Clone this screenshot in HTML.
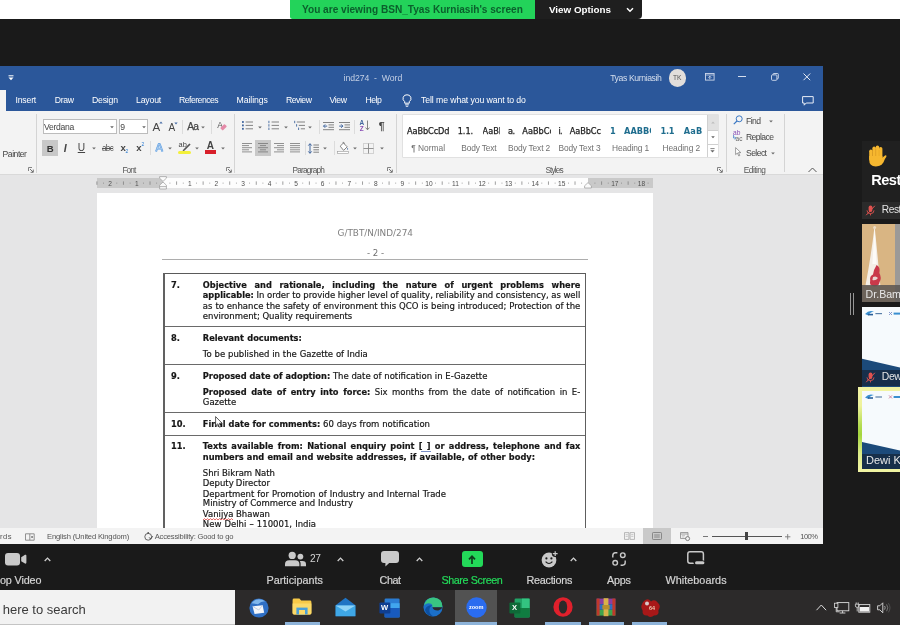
<!DOCTYPE html>
<html lang="en"><head><meta charset="utf-8"><title>Zoom Meeting - screen share</title>
<style>
html,body{margin:0;padding:0;background:#1a1a1a;width:900px;height:625px;overflow:hidden;}
#v{position:relative;width:900px;height:625px;overflow:hidden;}
#s{position:absolute;left:-6px;top:-6px;width:912px;height:637px;background:#1a1a1a;filter:blur(0.3px);}
#o{position:absolute;left:6px;top:6px;width:900px;height:625px;font-family:"Liberation Sans",sans-serif;}
#o div,#o span,#o svg{position:absolute;}
#o span{white-space:pre;line-height:1;}
#o svg{overflow:visible;}
</style></head><body><div id="v"><div id="s"><div id="o">
<div style="left:-6px;top:-6px;width:912px;height:25px;background:#fff;"></div>
<div style="left:290px;top:-6px;width:246px;height:25px;background:#23d35a;border-radius:0 0 0 2.5px;"></div>
<div style="left:535px;top:-6px;width:107px;height:25px;background:#1f1f1f;border-radius:0 0 4px 0;"></div>
<span style="left:302px;top:5.2px;font-size:10.1px;color:#0b5f2c;font-weight:bold;">You are viewing BSN_Tyas Kurniasih&#x27;s screen</span>
<span style="left:549px;top:5.34px;font-size:9.82px;color:#fff;font-weight:bold;">View Options</span>
<svg style="left:626px;top:7px;" width="8" height="6" viewBox="0 0 8 6"><path d="M1 1.2 L4 4.2 L7 1.2" fill="none" stroke="#fff" stroke-width="1.5"/></svg>
<div style="left:-6px;top:66px;width:829px;height:45px;background:#2b579a;"></div>
<div style="left:-6px;top:90px;width:12px;height:21px;background:#f3f3f3;"></div>
<div style="left:-6px;top:111px;width:829px;height:64px;background:#f3f3f3;"></div>
<div style="left:-6px;top:175px;width:829px;height:353px;background:#e5e5e6;"></div>
<div style="left:-6px;top:174px;width:829px;height:1px;background:#d9d9d9;"></div>
<div style="left:96.8px;top:193.4px;width:556.4px;height:335px;background:#fff;"></div>
<div style="left:-6px;top:528px;width:829px;height:16px;background:#f3f3f3;"></div>
<div style="left:-6px;top:544px;width:912px;height:46px;background:#1a1a1a;"></div>
<div style="left:-6px;top:589.8px;width:912px;height:41.2px;background:#2c2a2a;"></div>
<div style="left:-6px;top:589.8px;width:241px;height:41.2px;background:#f2f2f2;"></div>
<div style="left:-6px;top:624px;width:241px;height:7px;background:#c4c4c4;"></div>
<div style="left:455px;top:589.8px;width:42px;height:41.2px;background:#525252;"></div>
<svg style="left:7px;top:75px;" width="8" height="6" viewBox="0 0 8 6"><path d="M1.5 0.8 H6.5" stroke="#fff" stroke-width="1"/><path d="M1.5 2.6 L4 5.2 L6.5 2.6 Z" fill="#fff"/></svg>
<span style="left:343.5px;top:74.47px;font-size:8.7px;color:#c3cfe4;letter-spacing:-0.037px;">ind274  -  Word</span>
<span style="left:610.2px;top:74.47px;font-size:8.7px;color:#d5deed;letter-spacing:-0.405px;">Tyas Kurniasih</span>
<div style="left:668.5px;top:69.2px;width:17.4px;height:17.4px;border-radius:50%;background:#e2dedb;"></div>
<span style="left:672.98px;top:75.06px;font-size:6.6px;color:#555;">TK</span>
<svg style="left:704.6px;top:73.4px;" width="10" height="8" viewBox="0 0 10 8"><rect x="0.5" y="0.5" width="8.6" height="6.6" fill="none" stroke="#cdd7ea" stroke-width="0.9"/><path d="M0.5 2 H9.1" stroke="#cdd7ea" stroke-width="0.8"/><path d="M4.8 6.2 V3.4 M3.4 4.6 L4.8 3.2 L6.2 4.6" fill="none" stroke="#cdd7ea" stroke-width="0.9"/></svg>
<div style="left:738px;top:76.4px;width:7.6px;height:0.9px;background:#d5deee;"></div>
<svg style="left:770.6px;top:73.4px;" width="8" height="8" viewBox="0 0 8 8"><rect x="0.5" y="1.9" width="5.4" height="5.4" rx="0.9" fill="none" stroke="#d5deee" stroke-width="0.9"/><path d="M2 1.9 V1.3 Q2 0.5 2.8 0.5 H6.5 Q7.3 0.5 7.3 1.3 V5 Q7.3 5.8 6.5 5.8 H5.9" fill="none" stroke="#d5deee" stroke-width="0.9"/></svg>
<svg style="left:802.8px;top:73.2px;" width="8" height="8" viewBox="0 0 8 8"><path d="M0.5 0.5 L7.2 7.2 M7.2 0.5 L0.5 7.2" stroke="#e3e9f4" stroke-width="1"/></svg>
<svg style="left:801.5px;top:95.5px;" width="12" height="10" viewBox="0 0 12 10"><path d="M0.6 0.6 H11.2 V7 H4.2 L2.2 9.2 V7 H0.6 Z" fill="none" stroke="#e8edf6" stroke-width="1"/></svg>
<span style="left:15.5px;top:96.17px;font-size:8.7px;color:#fff;letter-spacing:-0.192px;">Insert</span>
<span style="left:54.7px;top:96.17px;font-size:8.7px;color:#fff;letter-spacing:-0.334px;">Draw</span>
<span style="left:92px;top:96.17px;font-size:8.7px;color:#fff;letter-spacing:-0.216px;">Design</span>
<span style="left:136px;top:96.17px;font-size:8.7px;color:#fff;letter-spacing:-0.164px;">Layout</span>
<span style="left:179px;top:96.17px;font-size:8.7px;color:#fff;letter-spacing:-0.532px;">References</span>
<span style="left:236.5px;top:96.17px;font-size:8.7px;color:#fff;letter-spacing:-0.059px;">Mailings</span>
<span style="left:286px;top:96.17px;font-size:8.7px;color:#fff;letter-spacing:-0.505px;">Review</span>
<span style="left:329.5px;top:96.17px;font-size:8.7px;color:#fff;letter-spacing:-0.4px;">View</span>
<span style="left:365.5px;top:96.17px;font-size:8.7px;color:#fff;letter-spacing:-0.531px;">Help</span>
<span style="left:421px;top:96.17px;font-size:8.7px;color:#fff;letter-spacing:-0.091px;">Tell me what you want to do</span>
<svg style="left:402px;top:94px;" width="10" height="13" viewBox="0 0 10 13"><path d="M5 0.8 A3.7 3.7 0 0 1 7.3 7.6 V9.2 H2.7 V7.6 A3.7 3.7 0 0 1 5 0.8 Z" fill="none" stroke="#fff" stroke-width="1"/><path d="M3.1 10.8 H6.9 M3.8 12.3 H6.2" stroke="#fff" stroke-width="0.9"/></svg>
<span style="left:2.6px;top:150.41px;font-size:8.6px;color:#444;letter-spacing:-0.475px;">Painter</span>
<svg style="left:28px;top:166.5px;" width="6" height="6" viewBox="0 0 6 6"><path d="M0.5 4 V0.5 H4" fill="none" stroke="#777" stroke-width="0.9"/><path d="M2 2 L5 5 M5.3 2.6 V5.3 H2.6" fill="none" stroke="#666" stroke-width="0.9"/></svg>
<div style="left:36px;top:113.5px;width:1px;height:59.0px;background:#d4d4d4;"></div>
<div style="left:42.5px;top:118.5px;width:72.7px;height:13.9px;background:#fff;border:1px solid #bcbcbc;"></div>
<span style="left:44px;top:122.72px;font-size:8.6px;color:#444;letter-spacing:-0.307px;">Verdana</span>
<svg style="left:110.4px;top:125.8px;" width="4" height="3" viewBox="0 0 4 3"><path d="M0.2 0.3 H3.8 L2 2.3 Z" fill="#666"/></svg>
<div style="left:118.6px;top:118.5px;width:27.8px;height:13.9px;background:#fff;border:1px solid #bcbcbc;"></div>
<span style="left:120.3px;top:122.72px;font-size:8.6px;color:#444;">9</span>
<svg style="left:141.9px;top:125.8px;" width="4" height="3" viewBox="0 0 4 3"><path d="M0.2 0.3 H3.8 L2 2.3 Z" fill="#666"/></svg>
<span style="left:152.6px;top:121.74px;font-size:11.5px;color:#444;">A</span>
<svg style="left:158.8px;top:121.4px;" width="4" height="3" viewBox="0 0 4 3"><path d="M0.3 2.4 H3.7 L2 0.4 Z" fill="#4a6fa8"/></svg>
<span style="left:168.6px;top:123.15px;font-size:10px;color:#444;">A</span>
<svg style="left:174px;top:121.6px;" width="4" height="3" viewBox="0 0 4 3"><path d="M0.3 0.4 H3.7 L2 2.4 Z" fill="#4a6fa8"/></svg>
<div style="left:182.3px;top:119.5px;width:1px;height:14px;background:#dcdcdc;"></div>
<span style="left:187.3px;top:121.56px;font-size:10.2px;color:#444;letter-spacing:-0.9px;-webkit-text-stroke:0.25px #444;">Aa</span>
<svg style="left:201px;top:126.1px;" width="4" height="3" viewBox="0 0 4 3"><path d="M0.2 0.5 H3.8 L2 2.5 Z" fill="#6a6a6a"/></svg>
<div style="left:211.4px;top:119.5px;width:1px;height:14px;background:#dcdcdc;"></div>
<span style="left:217.2px;top:120.56px;font-size:8.5px;color:#555;">A</span>
<svg style="left:219.6px;top:124.2px;" width="7" height="7" viewBox="0 0 7 7"><rect x="1.6" y="0.3" width="3.6" height="6" rx="0.8" transform="rotate(45 3.5 3.5)" fill="#e48aa8"/></svg>
<div style="left:42.2px;top:140px;width:15.8px;height:16.3px;background:#c8c8c8;"></div>
<span style="left:46.63px;top:143.74px;font-size:9.6px;color:#333;font-weight:bold;">B</span>
<span style="left:63.73px;top:143.16px;font-size:10.6px;color:#444;font-style:italic;font-weight:bold;">I</span>
<span style="left:77.72px;top:142.96px;font-size:10.2px;color:#444;text-decoration:underline;text-underline-offset:1px;">U</span>
<svg style="left:92.2px;top:147.4px;" width="4" height="3" viewBox="0 0 4 3"><path d="M0.2 0.5 H3.8 L2 2.5 Z" fill="#6a6a6a"/></svg>
<span style="left:102px;top:144.6px;font-size:8.2px;color:#555;letter-spacing:-0.71px;text-decoration:line-through;">abc</span>
<span style="left:120.4px;top:143.44px;font-size:9.6px;color:#444;font-weight:bold;">x</span>
<span style="left:125.6px;top:148.62px;font-size:5px;color:#2b7cd3;">2</span>
<span style="left:136.2px;top:143.44px;font-size:9.6px;color:#444;font-weight:bold;">x</span>
<span style="left:141.6px;top:141.62px;font-size:5px;color:#2b7cd3;">2</span>
<div style="left:149.7px;top:141px;width:1px;height:14px;background:#dcdcdc;"></div>
<svg style="left:155px;top:143.2px;" width="8.5" height="9.4" viewBox="0 0 10 11"><path d="M1.2 10 L4.4 1.2 H5.6 L8.8 10 M2.6 6.6 H7.4" fill="none" stroke="#a9cdf3" stroke-width="2.6" stroke-linejoin="round"/><path d="M1.2 10 L4.4 1.2 H5.6 L8.8 10 M2.6 6.6 H7.4" fill="none" stroke="#3f8ad8" stroke-width="1.7" stroke-linejoin="round"/><path d="M1.2 10 L4.4 1.2 H5.6 L8.8 10 M2.6 6.6 H7.4" fill="none" stroke="#fff" stroke-width="0.6" stroke-linejoin="round"/></svg>
<svg style="left:167.9px;top:147.4px;" width="4" height="3" viewBox="0 0 4 3"><path d="M0.2 0.5 H3.8 L2 2.5 Z" fill="#6a6a6a"/></svg>
<span style="left:178.6px;top:141.09px;font-size:7.4px;color:#444;">ab</span>
<svg style="left:181px;top:142.5px;" width="10" height="9" viewBox="0 0 10 9"><path d="M8.4 0.4 L2.4 6.4 L1.2 8.6 L3.6 7.6 L9.6 1.6 Z" fill="#555"/></svg>
<div style="left:178px;top:150.6px;width:12.6px;height:3.4px;background:#f3f03a;border-radius:1.5px;"></div>
<svg style="left:194.8px;top:147.4px;" width="4" height="3" viewBox="0 0 4 3"><path d="M0.2 0.5 H3.8 L2 2.5 Z" fill="#6a6a6a"/></svg>
<span style="left:206.79px;top:141.45px;font-size:10px;color:#444;font-weight:bold;">A</span>
<div style="left:205px;top:150.4px;width:11px;height:3.2px;background:#d81f2a;"></div>
<svg style="left:221.2px;top:147.4px;" width="4" height="3" viewBox="0 0 4 3"><path d="M0.2 0.5 H3.8 L2 2.5 Z" fill="#6a6a6a"/></svg>
<span style="left:122.4px;top:166.06px;font-size:8.3px;color:#555;letter-spacing:-0.869px;">Font</span>
<svg style="left:225.5px;top:166.5px;" width="6" height="6" viewBox="0 0 6 6"><path d="M0.5 4 V0.5 H4" fill="none" stroke="#777" stroke-width="0.9"/><path d="M2 2 L5 5 M5.3 2.6 V5.3 H2.6" fill="none" stroke="#666" stroke-width="0.9"/></svg>
<div style="left:234px;top:113.5px;width:1px;height:59.0px;background:#d4d4d4;"></div>
<svg style="left:241.7px;top:121.4px;" width="11" height="9" viewBox="0 0 11 9"><rect x="0" y="0.09999999999999998" width="1.8" height="1.8" fill="#41669e"/><path d="M3.6 1.0 H11" stroke="#767676" stroke-width="0.9"/><rect x="0" y="3.5000000000000004" width="1.8" height="1.8" fill="#41669e"/><path d="M3.6 4.4 H11" stroke="#767676" stroke-width="0.9"/><rect x="0" y="6.8999999999999995" width="1.8" height="1.8" fill="#41669e"/><path d="M3.6 7.8 H11" stroke="#767676" stroke-width="0.9"/></svg>
<svg style="left:257.7px;top:125.6px;" width="4" height="3" viewBox="0 0 4 3"><path d="M0.2 0.5 H3.8 L2 2.5 Z" fill="#6a6a6a"/></svg>
<svg style="left:267.8px;top:121.4px;" width="11" height="9" viewBox="0 0 11 9"><path d="M0.9 -0.19999999999999996 V2.2" stroke="#41669e" stroke-width="0.9"/><path d="M3.6 1.0 H11" stroke="#767676" stroke-width="0.9"/><path d="M0.9 3.2 V5.6000000000000005" stroke="#41669e" stroke-width="0.9"/><path d="M3.6 4.4 H11" stroke="#767676" stroke-width="0.9"/><path d="M0.9 6.6 V9.0" stroke="#41669e" stroke-width="0.9"/><path d="M3.6 7.8 H11" stroke="#767676" stroke-width="0.9"/></svg>
<svg style="left:284px;top:125.6px;" width="4" height="3" viewBox="0 0 4 3"><path d="M0.2 0.5 H3.8 L2 2.5 Z" fill="#6a6a6a"/></svg>
<svg style="left:294.3px;top:121.4px;" width="11" height="9" viewBox="0 0 11 9"><path d="M0.7 -0.2 V2.2" stroke="#41669e" stroke-width="0.9"/><path d="M2.8 1 H11" stroke="#767676" stroke-width="0.9"/><path d="M2.6 3.2 V5.6" stroke="#41669e" stroke-width="0.9"/><path d="M4.8 4.4 H11" stroke="#767676" stroke-width="0.9"/><path d="M4.6 6.6 V9" stroke="#41669e" stroke-width="0.9"/><path d="M6.8 7.8 H11" stroke="#767676" stroke-width="0.9"/></svg>
<svg style="left:308.3px;top:125.6px;" width="4" height="3" viewBox="0 0 4 3"><path d="M0.2 0.5 H3.8 L2 2.5 Z" fill="#6a6a6a"/></svg>
<div style="left:318.5px;top:119.5px;width:1px;height:14px;background:#dcdcdc;"></div>
<svg style="left:322.6px;top:121.6px;" width="11" height="9" viewBox="0 0 11 9"><path d="M0 0.5 H11 M5.5 2.9 H11 M5.5 5.3 H11 M0 7.7 H11" stroke="#767676" stroke-width="0.9"/><path d="M4.2 4.1 H0.6 M2.2 2.4 L0.5 4.1 L2.2 5.8" fill="none" stroke="#41669e" stroke-width="1"/></svg>
<svg style="left:338.7px;top:121.6px;" width="11" height="9" viewBox="0 0 11 9"><path d="M0 0.5 H11 M5.5 2.9 H11 M5.5 5.3 H11 M0 7.7 H11" stroke="#767676" stroke-width="0.9"/><path d="M0.2 4.1 H3.8 M2.2 2.4 L3.9 4.1 L2.2 5.8" fill="none" stroke="#41669e" stroke-width="1"/></svg>
<div style="left:353.8px;top:119.5px;width:1px;height:14px;background:#dcdcdc;"></div>
<span style="left:359.5px;top:119.56px;font-size:6.4px;color:#41669e;font-weight:bold;">A</span>
<span style="left:359.7px;top:125.56px;font-size:6.4px;color:#8a4fb5;font-weight:bold;">Z</span>
<svg style="left:365px;top:120px;" width="5" height="11" viewBox="0 0 5 11"><path d="M2.5 0.5 V9.6 M0.6 7.6 L2.5 9.8 L4.4 7.6" fill="none" stroke="#767676" stroke-width="0.9"/></svg>
<span style="left:378.68px;top:121.41px;font-size:10.5px;color:#444;font-weight:bold;">¶</span>
<svg style="left:242.2px;top:143.4px;" width="10" height="10" viewBox="0 0 10 10"><path d="M0 0.5 H10" stroke="#767676" stroke-width="0.8"/><path d="M0 2.6 H7" stroke="#767676" stroke-width="0.8"/><path d="M0 4.7 H10" stroke="#767676" stroke-width="0.8"/><path d="M0 6.8 H7" stroke="#767676" stroke-width="0.8"/><path d="M0 8.9 H10" stroke="#767676" stroke-width="0.8"/></svg>
<div style="left:255.1px;top:140px;width:15.9px;height:16.3px;background:#c8c8c8;"></div>
<svg style="left:258.1px;top:143.4px;" width="10" height="10" viewBox="0 0 10 10"><path d="M0.0 0.5 H10.0" stroke="#767676" stroke-width="0.8"/><path d="M2.0 2.6 H8.0" stroke="#767676" stroke-width="0.8"/><path d="M0.0 4.7 H10.0" stroke="#767676" stroke-width="0.8"/><path d="M2.0 6.8 H8.0" stroke="#767676" stroke-width="0.8"/><path d="M0.0 8.9 H10.0" stroke="#767676" stroke-width="0.8"/></svg>
<svg style="left:274.4px;top:143.4px;" width="10" height="10" viewBox="0 0 10 10"><path d="M0 0.5 H10" stroke="#767676" stroke-width="0.8"/><path d="M3 2.6 H10" stroke="#767676" stroke-width="0.8"/><path d="M0 4.7 H10" stroke="#767676" stroke-width="0.8"/><path d="M3 6.8 H10" stroke="#767676" stroke-width="0.8"/><path d="M0 8.9 H10" stroke="#767676" stroke-width="0.8"/></svg>
<svg style="left:290.1px;top:143.4px;" width="10" height="10" viewBox="0 0 10 10"><path d="M0 0.5 H10" stroke="#767676" stroke-width="0.8"/><path d="M0 2.6 H10" stroke="#767676" stroke-width="0.8"/><path d="M0 4.7 H10" stroke="#767676" stroke-width="0.8"/><path d="M0 6.8 H10" stroke="#767676" stroke-width="0.8"/><path d="M0 8.9 H10" stroke="#767676" stroke-width="0.8"/></svg>
<div style="left:304.7px;top:141px;width:1px;height:14px;background:#dcdcdc;"></div>
<svg style="left:308.4px;top:142.6px;" width="11" height="11" viewBox="0 0 11 11"><path d="M2 0.8 V10.2 M0.3 2.6 L2 0.7 L3.7 2.6 M0.3 8.4 L2 10.3 L3.7 8.4" fill="none" stroke="#41669e" stroke-width="1"/><path d="M5.4 2 H11 M5.4 4.4 H11 M5.4 6.8 H11 M5.4 9.2 H11" stroke="#767676" stroke-width="0.9"/></svg>
<svg style="left:323px;top:147.4px;" width="4" height="3" viewBox="0 0 4 3"><path d="M0.2 0.5 H3.8 L2 2.5 Z" fill="#6a6a6a"/></svg>
<div style="left:333.6px;top:141px;width:1px;height:14px;background:#dcdcdc;"></div>
<svg style="left:337.4px;top:142px;" width="12" height="12" viewBox="0 0 12 12"><path d="M3.2 4.2 L6.4 1 L10.2 4.8 L6.6 8.4 Z" fill="#fff" stroke="#767676" stroke-width="0.9"/><path d="M5.6 0.4 Q7.4 -0.4 7.4 2" fill="none" stroke="#767676" stroke-width="0.8"/><path d="M10.6 5.6 Q11.8 7.4 10.6 8 Q9.6 7.4 10.6 5.6 Z" fill="#41669e"/><rect x="0.6" y="9.6" width="10.8" height="2" fill="#fff" stroke="#999" stroke-width="0.6"/></svg>
<svg style="left:353.3px;top:147.4px;" width="4" height="3" viewBox="0 0 4 3"><path d="M0.2 0.5 H3.8 L2 2.5 Z" fill="#6a6a6a"/></svg>
<svg style="left:363.3px;top:142.8px;" width="11" height="11" viewBox="0 0 11 11"><rect x="0.5" y="0.5" width="10" height="10" fill="none" stroke="#aaa" stroke-width="0.9" stroke-dasharray="1 1"/><path d="M5.5 0.5 V10.5 M0.5 5.5 H10.5" stroke="#888" stroke-width="0.9"/></svg>
<svg style="left:379.6px;top:147.4px;" width="4" height="3" viewBox="0 0 4 3"><path d="M0.2 0.5 H3.8 L2 2.5 Z" fill="#6a6a6a"/></svg>
<span style="left:292.4px;top:166.06px;font-size:8.3px;color:#555;letter-spacing:-0.77px;">Paragraph</span>
<svg style="left:387px;top:166.5px;" width="6" height="6" viewBox="0 0 6 6"><path d="M0.5 4 V0.5 H4" fill="none" stroke="#777" stroke-width="0.9"/><path d="M2 2 L5 5 M5.3 2.6 V5.3 H2.6" fill="none" stroke="#666" stroke-width="0.9"/></svg>
<div style="left:396px;top:113.5px;width:1px;height:59.0px;background:#d4d4d4;"></div>
<div style="left:402.9px;top:114.8px;width:314.8px;height:42.4px;background:#fff;box-shadow:0 0 0 0.6px #d6d6d6;"></div>
<div style="left:707.3px;top:114.8px;width:10.4px;height:14.8px;background:#e1e1e1;"></div>
<div style="left:707.3px;top:114.8px;width:0.8px;height:42.4px;background:#d0d0d0;"></div>
<div style="left:707.3px;top:129.6px;width:10.4px;height:0.7px;background:#d0d0d0;"></div>
<div style="left:707.3px;top:143.8px;width:10.4px;height:0.7px;background:#d0d0d0;"></div>
<svg style="left:710.5px;top:121px;" width="4" height="3" viewBox="0 0 4 3"><path d="M0.2 2.4 H3.8 L2 0.4 Z" fill="#bdbdbd"/></svg>
<svg style="left:710.5px;top:136px;" width="4" height="3" viewBox="0 0 4 3"><path d="M0.2 0.3 H3.8 L2 2.3 Z" fill="#666"/></svg>
<svg style="left:710.3px;top:148.4px;" width="5" height="5" viewBox="0 0 5 5"><path d="M0.4 0.6 H4.6" stroke="#666" stroke-width="0.8"/><path d="M0.4 2.2 H4.6 L2.5 4.6 Z" fill="#666"/></svg>
<span style="left:407px;top:126.91px;font-size:8.2px;color:#222;letter-spacing:-0.103px;font-family:'DejaVu Sans','Liberation Sans',sans-serif;-webkit-text-stroke:0.25px #222;">AaBbCcDd</span>
<span style="left:411.2px;top:143.51px;font-size:8.4px;color:#707070;letter-spacing:0.012px;">¶ Normal</span>
<span style="left:457.7px;top:126.91px;font-size:8.2px;color:#222;letter-spacing:-0.049px;font-family:'DejaVu Sans','Liberation Sans',sans-serif;-webkit-text-stroke:0.25px #222;">1.1.</span>
<span style="left:482.6px;top:126.91px;font-size:8.2px;color:#222;-webkit-text-stroke:0.25px #222;font-family:'DejaVu Sans','Liberation Sans',sans-serif;width:17.2px;overflow:hidden;">AaBb</span>
<span style="left:461.3px;top:143.51px;font-size:8.4px;color:#707070;letter-spacing:-0.154px;">Body Text</span>
<span style="left:508.1px;top:126.91px;font-size:8.2px;color:#222;letter-spacing:-0.632px;font-family:'DejaVu Sans','Liberation Sans',sans-serif;-webkit-text-stroke:0.25px #222;">a.</span>
<span style="left:522.3px;top:126.91px;font-size:8.2px;color:#222;-webkit-text-stroke:0.25px #222;font-family:'DejaVu Sans','Liberation Sans',sans-serif;width:28.6px;overflow:hidden;">AaBbCc</span>
<span style="left:508.1px;top:143.51px;font-size:8.4px;color:#707070;letter-spacing:-0.154px;">Body Text 2</span>
<span style="left:558.5px;top:126.91px;font-size:8.2px;color:#222;letter-spacing:-0.785px;font-family:'DejaVu Sans','Liberation Sans',sans-serif;-webkit-text-stroke:0.25px #222;">i.</span>
<span style="left:569.8px;top:126.91px;font-size:8.2px;color:#222;letter-spacing:-0.1px;font-family:'DejaVu Sans','Liberation Sans',sans-serif;-webkit-text-stroke:0.25px #222;">AaBbCc</span>
<span style="left:558.5px;top:143.51px;font-size:8.4px;color:#707070;letter-spacing:-0.154px;">Body Text 3</span>
<span style="left:610.1px;top:126.91px;font-size:8.2px;color:#1f6d8e;font-family:'DejaVu Sans','Liberation Sans',sans-serif;font-weight:bold;">1</span>
<span style="left:624.1px;top:126.91px;font-size:8.2px;font-weight:bold;color:#1f6d8e;font-family:'DejaVu Sans','Liberation Sans',sans-serif;width:27.2px;overflow:hidden;">AABBC</span>
<span style="left:612px;top:143.51px;font-size:8.4px;color:#707070;letter-spacing:-0.137px;">Heading 1</span>
<span style="left:660.6px;top:126.91px;font-size:8.2px;color:#1f6d8e;letter-spacing:-0.363px;font-family:'DejaVu Sans','Liberation Sans',sans-serif;font-weight:bold;">1.1</span>
<span style="left:683.8px;top:126.91px;font-size:8.2px;color:#1f6d8e;letter-spacing:0.135px;font-family:'DejaVu Sans','Liberation Sans',sans-serif;font-weight:bold;">AaB</span>
<span style="left:662.5px;top:143.51px;font-size:8.4px;color:#707070;letter-spacing:-0.062px;">Heading 2</span>
<span style="left:545.4px;top:166.06px;font-size:8.3px;color:#555;letter-spacing:-0.88px;">Styles</span>
<svg style="left:716.6px;top:166.5px;" width="6" height="6" viewBox="0 0 6 6"><path d="M0.5 4 V0.5 H4" fill="none" stroke="#777" stroke-width="0.9"/><path d="M2 2 L5 5 M5.3 2.6 V5.3 H2.6" fill="none" stroke="#666" stroke-width="0.9"/></svg>
<div style="left:725.6px;top:113.5px;width:1px;height:58.0px;background:#d4d4d4;"></div>
<svg style="left:733.2px;top:115.2px;" width="10" height="10" viewBox="0 0 10 10"><circle cx="6.2" cy="3.8" r="3" fill="none" stroke="#3b78c4" stroke-width="1"/><path d="M4 6 L0.8 9.2" stroke="#3b78c4" stroke-width="1.2"/></svg>
<span style="left:746px;top:116.72px;font-size:8.6px;color:#444;letter-spacing:-0.543px;">Find</span>
<svg style="left:769.1px;top:120.0px;" width="4" height="3" viewBox="0 0 4 3"><path d="M0.2 0.5 H3.8 L2 2.5 Z" fill="#6a6a6a"/></svg>
<span style="left:733px;top:130.47px;font-size:6.6px;color:#8a4fb5;">ab</span>
<span style="left:735.6px;top:135.96px;font-size:6.4px;color:#666;">ac</span>
<svg style="left:732.6px;top:135px;" width="4" height="5" viewBox="0 0 4 5"><path d="M0.5 0 V3 H2.6 M1.6 1.8 L2.9 3 L1.6 4.2" fill="none" stroke="#3b78c4" stroke-width="0.7"/></svg>
<span style="left:746px;top:132.91px;font-size:8.6px;color:#444;letter-spacing:-0.592px;">Replace</span>
<svg style="left:735px;top:147.4px;" width="6" height="10" viewBox="0 0 6 10"><path d="M0.6 0.6 V7.6 L2.4 6 L3.8 9 L4.8 8.5 L3.5 5.6 H5.8 Z" fill="#fff" stroke="#777" stroke-width="0.7"/></svg>
<span style="left:746px;top:148.72px;font-size:8.6px;color:#444;letter-spacing:-0.58px;">Select</span>
<svg style="left:770.7px;top:152.0px;" width="4" height="3" viewBox="0 0 4 3"><path d="M0.2 0.5 H3.8 L2 2.5 Z" fill="#6a6a6a"/></svg>
<span style="left:743.8px;top:166.06px;font-size:8.3px;color:#555;letter-spacing:-0.53px;">Editing</span>
<div style="left:784.4px;top:113.5px;width:1px;height:58.0px;background:#d4d4d4;"></div>
<svg style="left:808px;top:166.5px;" width="9" height="6" viewBox="0 0 9 6"><path d="M0.5 5 L4.5 1 L8.5 5" fill="none" stroke="#555" stroke-width="1"/></svg>
<div style="left:96.5px;top:178.2px;width:66.8px;height:9.8px;background:#c9c9c9;"></div>
<div style="left:163.3px;top:178.2px;width:425px;height:9.8px;background:#fdfdfd;"></div>
<div style="left:588.3px;top:178.2px;width:65.1px;height:9.8px;background:#c9c9c9;"></div>
<span style="left:108.34px;top:180.77px;font-size:6.6px;color:#505050;">2</span>
<span style="left:134.9px;top:180.77px;font-size:6.6px;color:#505050;">1</span>
<span style="left:188.03px;top:180.77px;font-size:6.6px;color:#505050;">1</span>
<span style="left:214.59px;top:180.77px;font-size:6.6px;color:#505050;">2</span>
<span style="left:241.15px;top:180.77px;font-size:6.6px;color:#505050;">3</span>
<span style="left:267.71px;top:180.77px;font-size:6.6px;color:#505050;">4</span>
<span style="left:294.28px;top:180.77px;font-size:6.6px;color:#505050;">5</span>
<span style="left:320.84px;top:180.77px;font-size:6.6px;color:#505050;">6</span>
<span style="left:347.4px;top:180.77px;font-size:6.6px;color:#505050;">7</span>
<span style="left:373.96px;top:180.77px;font-size:6.6px;color:#505050;">8</span>
<span style="left:400.53px;top:180.77px;font-size:6.6px;color:#505050;">9</span>
<span style="left:425.25px;top:180.77px;font-size:6.6px;color:#505050;">10</span>
<span style="left:452.06px;top:180.77px;font-size:6.6px;color:#505050;">11</span>
<span style="left:478.38px;top:180.77px;font-size:6.6px;color:#505050;">12</span>
<span style="left:504.94px;top:180.77px;font-size:6.6px;color:#505050;">13</span>
<span style="left:531.5px;top:180.77px;font-size:6.6px;color:#505050;">14</span>
<span style="left:558.07px;top:180.77px;font-size:6.6px;color:#505050;">15</span>
<span style="left:611.19px;top:180.77px;font-size:6.6px;color:#505050;">17</span>
<span style="left:637.75px;top:180.77px;font-size:6.6px;color:#505050;">18</span>
<svg style="left:96px;top:178px;" width="560" height="10" viewBox="0 0 560 10"><path d="M0.89 3.4 V6.8" stroke="#777" stroke-width="0.7"/><rect x="7.13" y="4.7" width="0.8" height="0.8" fill="#777"/><rect x="20.42" y="4.7" width="0.8" height="0.8" fill="#777"/><path d="M27.46 3.4 V6.8" stroke="#777" stroke-width="0.7"/><rect x="33.7" y="4.7" width="0.8" height="0.8" fill="#777"/><rect x="46.98" y="4.7" width="0.8" height="0.8" fill="#777"/><path d="M54.02 3.4 V6.8" stroke="#777" stroke-width="0.7"/><rect x="60.26" y="4.7" width="0.8" height="0.8" fill="#777"/><rect x="73.54" y="4.7" width="0.8" height="0.8" fill="#777"/><path d="M80.58 3.4 V6.8" stroke="#777" stroke-width="0.7"/><rect x="86.82" y="4.7" width="0.8" height="0.8" fill="#777"/><rect x="100.1" y="4.7" width="0.8" height="0.8" fill="#777"/><path d="M107.14 3.4 V6.8" stroke="#777" stroke-width="0.7"/><rect x="113.38" y="4.7" width="0.8" height="0.8" fill="#777"/><rect x="126.67" y="4.7" width="0.8" height="0.8" fill="#777"/><path d="M133.71 3.4 V6.8" stroke="#777" stroke-width="0.7"/><rect x="139.95" y="4.7" width="0.8" height="0.8" fill="#777"/><rect x="153.23" y="4.7" width="0.8" height="0.8" fill="#777"/><path d="M160.27 3.4 V6.8" stroke="#777" stroke-width="0.7"/><rect x="166.51" y="4.7" width="0.8" height="0.8" fill="#777"/><rect x="179.79" y="4.7" width="0.8" height="0.8" fill="#777"/><path d="M186.83 3.4 V6.8" stroke="#777" stroke-width="0.7"/><rect x="193.07" y="4.7" width="0.8" height="0.8" fill="#777"/><rect x="206.35" y="4.7" width="0.8" height="0.8" fill="#777"/><path d="M213.39 3.4 V6.8" stroke="#777" stroke-width="0.7"/><rect x="219.63" y="4.7" width="0.8" height="0.8" fill="#777"/><rect x="232.92" y="4.7" width="0.8" height="0.8" fill="#777"/><path d="M239.96 3.4 V6.8" stroke="#777" stroke-width="0.7"/><rect x="246.2" y="4.7" width="0.8" height="0.8" fill="#777"/><rect x="259.48" y="4.7" width="0.8" height="0.8" fill="#777"/><path d="M266.52 3.4 V6.8" stroke="#777" stroke-width="0.7"/><rect x="272.76" y="4.7" width="0.8" height="0.8" fill="#777"/><rect x="286.04" y="4.7" width="0.8" height="0.8" fill="#777"/><path d="M293.08 3.4 V6.8" stroke="#777" stroke-width="0.7"/><rect x="299.32" y="4.7" width="0.8" height="0.8" fill="#777"/><rect x="312.6" y="4.7" width="0.8" height="0.8" fill="#777"/><path d="M319.64 3.4 V6.8" stroke="#777" stroke-width="0.7"/><rect x="325.88" y="4.7" width="0.8" height="0.8" fill="#777"/><rect x="339.17" y="4.7" width="0.8" height="0.8" fill="#777"/><path d="M346.21 3.4 V6.8" stroke="#777" stroke-width="0.7"/><rect x="352.45" y="4.7" width="0.8" height="0.8" fill="#777"/><rect x="365.73" y="4.7" width="0.8" height="0.8" fill="#777"/><path d="M372.77 3.4 V6.8" stroke="#777" stroke-width="0.7"/><rect x="379.01" y="4.7" width="0.8" height="0.8" fill="#777"/><rect x="392.29" y="4.7" width="0.8" height="0.8" fill="#777"/><path d="M399.33 3.4 V6.8" stroke="#777" stroke-width="0.7"/><rect x="405.57" y="4.7" width="0.8" height="0.8" fill="#777"/><rect x="418.85" y="4.7" width="0.8" height="0.8" fill="#777"/><path d="M425.89 3.4 V6.8" stroke="#777" stroke-width="0.7"/><rect x="432.13" y="4.7" width="0.8" height="0.8" fill="#777"/><rect x="445.42" y="4.7" width="0.8" height="0.8" fill="#777"/><path d="M452.46 3.4 V6.8" stroke="#777" stroke-width="0.7"/><rect x="458.7" y="4.7" width="0.8" height="0.8" fill="#777"/><rect x="471.98" y="4.7" width="0.8" height="0.8" fill="#777"/><path d="M479.02 3.4 V6.8" stroke="#777" stroke-width="0.7"/><rect x="485.26" y="4.7" width="0.8" height="0.8" fill="#777"/><rect x="498.54" y="4.7" width="0.8" height="0.8" fill="#777"/><path d="M505.58 3.4 V6.8" stroke="#777" stroke-width="0.7"/><rect x="511.82" y="4.7" width="0.8" height="0.8" fill="#777"/><rect x="525.1" y="4.7" width="0.8" height="0.8" fill="#777"/><path d="M532.14 3.4 V6.8" stroke="#777" stroke-width="0.7"/><rect x="538.38" y="4.7" width="0.8" height="0.8" fill="#777"/><rect x="551.67" y="4.7" width="0.8" height="0.8" fill="#777"/></svg>
<svg style="left:159.3px;top:176.4px;" width="8" height="14" viewBox="0 0 8 14"><path d="M0.6 0.6 H7.4 V2.2 L4 5.4 L0.6 2.2 Z" fill="#fafafa" stroke="#9a9a9a" stroke-width="0.7"/><path d="M4 6 L7.4 9.2 V13 H0.6 V9.2 Z" fill="#fafafa" stroke="#9a9a9a" stroke-width="0.7"/><path d="M0.6 10.6 H7.4" stroke="#9a9a9a" stroke-width="0.7"/></svg>
<svg style="left:584.3px;top:182px;" width="8" height="7" viewBox="0 0 8 7"><path d="M4 0.6 L7.4 3.8 V6 H0.6 V3.8 Z" fill="#fafafa" stroke="#9a9a9a" stroke-width="0.7"/></svg>
<span style="left:337.57px;top:228.97px;font-size:8.9px;color:#808080;font-family:'DejaVu Sans','Liberation Sans',sans-serif;">G/TBT/N/IND/274</span>
<span style="left:367.03px;top:249.11px;font-size:8.6px;color:#6e6e6e;font-family:'DejaVu Sans','Liberation Sans',sans-serif;">- 2 -</span>
<div style="left:162.4px;top:258.7px;width:426px;height:0.9px;background:#adadad;"></div>
<div style="left:164px;top:273px;width:421.8px;height:1px;background:#5a5a5a;"></div>
<div style="left:164px;top:326px;width:421.8px;height:0.9px;background:#6a6a6a;"></div>
<div style="left:164px;top:364px;width:421.8px;height:0.9px;background:#6a6a6a;"></div>
<div style="left:164px;top:411.7px;width:421.8px;height:0.9px;background:#6a6a6a;"></div>
<div style="left:164px;top:434.5px;width:421.8px;height:0.9px;background:#6a6a6a;"></div>
<div style="left:163.3px;top:273px;width:2.1px;height:255.2px;background:#616161;"></div>
<div style="left:584.7px;top:273px;width:1.5px;height:255.2px;background:#5e5e5e;"></div>
<span style="left:171px;top:280.95px;font-size:8.5px;color:#161616;-webkit-text-stroke:0.18px #161616;font-family:'DejaVu Sans','Liberation Sans',sans-serif;"><b style="font-size:8.25px">7.</b></span>
<span style="left:171px;top:333.75px;font-size:8.5px;color:#161616;-webkit-text-stroke:0.18px #161616;font-family:'DejaVu Sans','Liberation Sans',sans-serif;"><b style="font-size:8.25px">8.</b></span>
<span style="left:171px;top:371.65px;font-size:8.5px;color:#161616;-webkit-text-stroke:0.18px #161616;font-family:'DejaVu Sans','Liberation Sans',sans-serif;"><b style="font-size:8.25px">9.</b></span>
<span style="left:171px;top:419.85px;font-size:8.5px;color:#161616;-webkit-text-stroke:0.18px #161616;font-family:'DejaVu Sans','Liberation Sans',sans-serif;"><b style="font-size:8.25px">10.</b></span>
<span style="left:171px;top:442.35px;font-size:8.5px;color:#161616;-webkit-text-stroke:0.18px #161616;font-family:'DejaVu Sans','Liberation Sans',sans-serif;"><b style="font-size:8.25px">11.</b></span>
<span style="left:202.8px;top:280.95px;font-size:8.5px;color:#161616;-webkit-text-stroke:0.18px #161616;font-family:'DejaVu Sans','Liberation Sans',sans-serif;word-spacing:4.818px;"><b style="font-size:8.25px">Objective and rationale, including the nature of urgent problems where</b></span>
<span style="left:202.8px;top:291.15px;font-size:8.5px;color:#161616;-webkit-text-stroke:0.18px #161616;font-family:'DejaVu Sans','Liberation Sans',sans-serif;word-spacing:-0.145px;"><b style="font-size:8.25px">applicable:</b> In order to provide higher level of quality, reliability and consistency, as well</span>
<span style="left:202.8px;top:302.35px;font-size:8.5px;color:#161616;-webkit-text-stroke:0.18px #161616;font-family:'DejaVu Sans','Liberation Sans',sans-serif;word-spacing:0.245px;">as to enhance the safety of environment this QCO is being introduced; Protection of the</span>
<span style="left:202.8px;top:311.55px;font-size:8.5px;color:#161616;-webkit-text-stroke:0.18px #161616;font-family:'DejaVu Sans','Liberation Sans',sans-serif;word-spacing:-0.076px;">environment; Quality requirements</span>
<span style="left:202.8px;top:333.75px;font-size:8.5px;color:#161616;-webkit-text-stroke:0.18px #161616;font-family:'DejaVu Sans','Liberation Sans',sans-serif;word-spacing:0.439px;"><b style="font-size:8.25px">Relevant documents:</b></span>
<span style="left:202.8px;top:349.65px;font-size:8.5px;color:#161616;-webkit-text-stroke:0.18px #161616;font-family:'DejaVu Sans','Liberation Sans',sans-serif;word-spacing:0.148px;">To be published in the Gazette of India</span>
<span style="left:202.8px;top:371.65px;font-size:8.5px;color:#161616;-webkit-text-stroke:0.18px #161616;font-family:'DejaVu Sans','Liberation Sans',sans-serif;word-spacing:0.025px;"><b style="font-size:8.25px">Proposed date of adoption:</b> The date of notification in E-Gazette</span>
<span style="left:202.8px;top:387.55px;font-size:8.5px;color:#161616;-webkit-text-stroke:0.18px #161616;font-family:'DejaVu Sans','Liberation Sans',sans-serif;word-spacing:1.759px;"><b style="font-size:8.25px">Proposed date of entry into force:</b> Six months from the date of notification in E-</span>
<span style="left:202.8px;top:397.95px;font-size:8.5px;color:#161616;-webkit-text-stroke:0.18px #161616;font-family:'DejaVu Sans','Liberation Sans',sans-serif;">Gazette</span>
<span style="left:202.8px;top:419.85px;font-size:8.5px;color:#161616;-webkit-text-stroke:0.18px #161616;font-family:'DejaVu Sans','Liberation Sans',sans-serif;word-spacing:0.125px;"><b style="font-size:8.25px">Final date for comments:</b> 60 days from notification</span>
<span style="left:202.8px;top:442.35px;font-size:8.5px;color:#161616;-webkit-text-stroke:0.18px #161616;font-family:'DejaVu Sans','Liberation Sans',sans-serif;word-spacing:1.379px;"><b style="font-size:8.25px">Texts available from: National enquiry point [ ] or address, telephone and fax</b></span>
<span style="left:202.8px;top:452.65px;font-size:8.5px;color:#161616;-webkit-text-stroke:0.18px #161616;font-family:'DejaVu Sans','Liberation Sans',sans-serif;word-spacing:0.347px;"><b style="font-size:8.25px">numbers and email and website addresses, if available, of other body:</b></span>
<span style="left:202.8px;top:468.55px;font-size:8.5px;color:#161616;-webkit-text-stroke:0.18px #161616;font-family:'DejaVu Sans','Liberation Sans',sans-serif;word-spacing:-0.114px;">Shri Bikram Nath</span>
<span style="left:202.8px;top:478.95px;font-size:8.5px;color:#161616;-webkit-text-stroke:0.18px #161616;font-family:'DejaVu Sans','Liberation Sans',sans-serif;word-spacing:-0.568px;">Deputy Director</span>
<span style="left:202.8px;top:490.25px;font-size:8.5px;color:#161616;-webkit-text-stroke:0.18px #161616;font-family:'DejaVu Sans','Liberation Sans',sans-serif;word-spacing:0.391px;">Department for Promotion of Industry and Internal Trade</span>
<span style="left:202.8px;top:499.15px;font-size:8.5px;color:#161616;-webkit-text-stroke:0.18px #161616;font-family:'DejaVu Sans','Liberation Sans',sans-serif;word-spacing:0.095px;">Ministry of Commerce and Industry</span>
<span style="left:202.8px;top:510.25px;font-size:8.5px;color:#161616;-webkit-text-stroke:0.18px #161616;font-family:'DejaVu Sans','Liberation Sans',sans-serif;word-spacing:-0.19px;">Vanijya Bhawan</span>
<span style="left:202.8px;top:520.45px;font-size:8.5px;color:#161616;-webkit-text-stroke:0.18px #161616;font-family:'DejaVu Sans','Liberation Sans',sans-serif;word-spacing:0.427px;">New Delhi – 110001, India</span>
<svg style="left:202.8px;top:517.6px;" width="31" height="3" viewBox="0 0 31 3"><path d="M0 2 L1.5 0.6 L3 2 L4.5 0.6 L6 2 L7.5 0.6 L9 2 L10.5 0.6 L12 2 L13.5 0.6 L15 2 L16.5 0.6 L18 2 L19.5 0.6 L21 2 L22.5 0.6 L24 2 L25.5 0.6 L27 2 L28.5 0.6 L30 2" fill="none" stroke="#e0403c" stroke-width="0.8"/></svg>
<div style="left:421px;top:451.2px;width:10px;height:0.8px;background:#7a8fc7;"></div>
<div style="left:-6px;top:528.2px;width:829px;height:16px;background:#f3f3f3;"></div>
<svg style="left:214.8px;top:416.4px;" width="8" height="12" viewBox="0 0 8 12"><path d="M0.6 0.6 V9.8 L2.8 7.8 L4.4 11.2 L5.8 10.6 L4.3 7.3 H7.2 Z" fill="#fff" stroke="#333" stroke-width="0.8"/></svg>
<span style="left:0px;top:533.19px;font-size:7.6px;color:#555;letter-spacing:0.471px;">rds</span>
<svg style="left:24.5px;top:532.6px;" width="10" height="8" viewBox="0 0 10 8"><path d="M0.5 0.8 H4.8 V7.2 H0.5 Z M4.8 0.8 H9.2 V7.2 H4.8" fill="none" stroke="#777" stroke-width="0.8"/><path d="M6.2 3 L8 5 M8 3 L6.2 5" stroke="#666" stroke-width="0.7"/></svg>
<span style="left:47px;top:533.19px;font-size:7.6px;color:#555;letter-spacing:-0.169px;">English (United Kingdom)</span>
<svg style="left:143.5px;top:532px;" width="9" height="9" viewBox="0 0 9 9"><circle cx="4.2" cy="4.8" r="3.4" fill="none" stroke="#555" stroke-width="0.9"/><circle cx="4.2" cy="1" r="0.9" fill="#555"/><path d="M5.2 5.4 L6.6 7 L8.8 4.2" fill="none" stroke="#444" stroke-width="0.9"/></svg>
<span style="left:154.7px;top:533.19px;font-size:7.6px;color:#555;letter-spacing:-0.18px;">Accessibility: Good to go</span>
<svg style="left:623.6px;top:532px;" width="11" height="8" viewBox="0 0 11 8"><path d="M0.5 0.6 H4.9 V7.4 H0.5 Z M6.1 0.6 H10.5 V7.4 H6.1 Z" fill="none" stroke="#a8a8a8" stroke-width="0.8"/><path d="M1.6 2.6 H3.8 M1.6 4.4 H3.8 M7.2 2.6 H9.4 M7.2 4.4 H9.4" stroke="#b5b5b5" stroke-width="0.7"/></svg>
<div style="left:643px;top:528.2px;width:27.8px;height:15.4px;background:#c9c9c9;"></div>
<svg style="left:652px;top:532px;" width="10" height="8" viewBox="0 0 10 8"><rect x="0.5" y="0.5" width="9" height="7" rx="0.8" fill="none" stroke="#777" stroke-width="0.8"/><path d="M2.2 3 H7.8 M2.2 5 H7.8" stroke="#777" stroke-width="0.8"/></svg>
<svg style="left:680.4px;top:532px;" width="10" height="9" viewBox="0 0 10 9"><path d="M0.5 0.5 H8 V6.5 H0.5 Z M0.5 2 H8" fill="none" stroke="#8a8a8a" stroke-width="0.8"/><path d="M1.8 3.6 H5 M1.8 5 H4.4" stroke="#aaa" stroke-width="0.6"/><circle cx="7.6" cy="6.6" r="2" fill="#f3f3f3" stroke="#666" stroke-width="0.8"/></svg>
<div style="left:703px;top:535.8px;width:5px;height:0.9px;background:#777;"></div>
<div style="left:712px;top:535.8px;width:69.6px;height:0.9px;background:#555;"></div>
<div style="left:745.4px;top:531.8px;width:2.8px;height:8.6px;background:#444;"></div>
<svg style="left:785.4px;top:533.6px;" width="6" height="6" viewBox="0 0 6 6"><path d="M0 2.8 H5.4 M2.7 0.1 V5.5" stroke="#777" stroke-width="0.9"/></svg>
<span style="left:800.3px;top:533.19px;font-size:7.6px;color:#555;letter-spacing:-0.579px;">100%</span>
<svg style="left:5px;top:552.6px;" width="22" height="13" viewBox="0 0 22 13"><rect x="0" y="0" width="15" height="12.4" rx="3" fill="#c9c9c9"/><path d="M16.2 4.2 L20 1.8 Q21.4 1.2 21.4 2.8 V9.6 Q21.4 11.2 20 10.6 L16.2 8.2 Z" fill="#c9c9c9"/></svg>
<svg style="left:44.4px;top:557.2px;" width="7" height="5" viewBox="0 0 7 5"><path d="M0.7 4 L3.5 1.1 L6.3 4" fill="none" stroke="#d0d0d0" stroke-width="1.3"/></svg>
<span style="left:0px;top:574.87px;font-size:10.8px;color:#d4d4d4;letter-spacing:-0.149px;-webkit-text-stroke:0.2px;">op Video</span>
<svg style="left:284.5px;top:551.4px;" width="21" height="16" viewBox="0 0 21 16"><circle cx="7.2" cy="4.4" r="3.6" fill="#c9c9c9"/><path d="M0 15.2 V13 Q0 9.2 4.2 9.2 H10.2 Q14.4 9.2 14.4 13 V15.2 Z" fill="#c9c9c9"/><circle cx="15.4" cy="5.6" r="2.9" fill="#c9c9c9"/><path d="M15.6 15.2 V12.6 Q15.6 11 14.8 10 H17.4 Q21 10 21 13.2 V15.2 Z" fill="#c9c9c9"/></svg>
<span style="left:310px;top:553.95px;font-size:10.2px;color:#d4d4d4;letter-spacing:-0.346px;">27</span>
<svg style="left:337.4px;top:557.4px;" width="7" height="5" viewBox="0 0 7 5"><path d="M0.7 4 L3.5 1.1 L6.3 4" fill="none" stroke="#d0d0d0" stroke-width="1.3"/></svg>
<span style="left:266.5px;top:574.87px;font-size:10.8px;color:#d4d4d4;-webkit-text-stroke:0.2px;">Participants</span>
<svg style="left:381.4px;top:550.5px;" width="18" height="16" viewBox="0 0 18 16"><path d="M3 0 H15 Q18 0 18 3 V9 Q18 12 15 12 H8.2 L4.4 15.6 V12 H3 Q0 12 0 9 V3 Q0 0 3 0 Z" fill="#c9c9c9"/></svg>
<svg style="left:416.0px;top:557.4px;" width="7" height="5" viewBox="0 0 7 5"><path d="M0.7 4 L3.5 1.1 L6.3 4" fill="none" stroke="#d0d0d0" stroke-width="1.3"/></svg>
<span style="left:379.6px;top:574.87px;font-size:10.8px;color:#d4d4d4;letter-spacing:-0.504px;-webkit-text-stroke:0.2px;">Chat</span>
<div style="left:461.5px;top:551.4px;width:21px;height:15.6px;background:#23d959;border-radius:3px;"></div>
<svg style="left:468px;top:554.6px;" width="8" height="10" viewBox="0 0 8 10"><path d="M4 9 V1.6 M1 4.4 L4 1.2 L7 4.4" fill="none" stroke="#0f3d1d" stroke-width="1.7"/></svg>
<span style="left:441.4px;top:574.87px;font-size:10.8px;color:#23d959;letter-spacing:-0.413px;-webkit-text-stroke:0.2px;">Share Screen</span>
<svg style="left:541px;top:550.6px;" width="17" height="17" viewBox="0 0 17 17"><circle cx="8" cy="9" r="7.4" fill="#c9c9c9"/><circle cx="5.4" cy="7.4" r="1.1" fill="#1a1a1a"/><circle cx="10.4" cy="7.4" r="1.1" fill="#1a1a1a"/><path d="M4.6 10.6 Q8 14.4 11.4 10.6" fill="none" stroke="#1a1a1a" stroke-width="1.2"/><circle cx="14.2" cy="2.6" r="3.4" fill="#1a1a1a"/><path d="M14.2 0.2 V5 M11.8 2.6 H16.6" stroke="#c9c9c9" stroke-width="1.2"/></svg>
<svg style="left:570.1px;top:557.4px;" width="7" height="5" viewBox="0 0 7 5"><path d="M0.7 4 L3.5 1.1 L6.3 4" fill="none" stroke="#d0d0d0" stroke-width="1.3"/></svg>
<span style="left:526.5px;top:574.87px;font-size:10.8px;color:#d4d4d4;letter-spacing:-0.266px;-webkit-text-stroke:0.2px;">Reactions</span>
<svg style="left:611.6px;top:552.4px;" width="14" height="14" viewBox="0 0 14 14"><path d="M5.4 0.8 H3.4 Q0.8 0.8 0.8 3.4 V5.4 M13.2 8.6 V10.6 Q13.2 13.2 10.6 13.2 H8.6" fill="none" stroke="#c9c9c9" stroke-width="1.4"/><circle cx="10.8" cy="3.2" r="2.3" fill="none" stroke="#c9c9c9" stroke-width="1.4"/><circle cx="3.2" cy="10.8" r="2.3" fill="none" stroke="#c9c9c9" stroke-width="1.4"/></svg>
<span style="left:606.9px;top:574.87px;font-size:10.8px;color:#d4d4d4;letter-spacing:-0.206px;-webkit-text-stroke:0.2px;">Apps</span>
<svg style="left:687.4px;top:551.4px;" width="18" height="14" viewBox="0 0 18 14"><rect x="0.8" y="0.8" width="15.6" height="11.4" rx="2.2" fill="none" stroke="#c9c9c9" stroke-width="1.5"/><rect x="6.4" y="9.2" width="11.4" height="4.6" rx="2.3" fill="#1a1a1a"/><rect x="8" y="10.2" width="9.4" height="3" rx="1.5" fill="#c9c9c9"/></svg>
<span style="left:665.4px;top:574.87px;font-size:10.8px;color:#d4d4d4;letter-spacing:0.057px;-webkit-text-stroke:0.2px;">Whiteboards</span>
<span style="left:2.7px;top:603.12px;font-size:13px;color:#3a3a3a;">here to search</span>
<div style="left:285px;top:622.4px;width:35.4px;height:8.6px;background:#8db3d9;"></div>
<div style="left:455px;top:622.4px;width:42px;height:8.6px;background:#8db3d9;"></div>
<div style="left:545px;top:622.4px;width:36px;height:8.6px;background:#8db3d9;"></div>
<div style="left:589.4px;top:622.4px;width:34.6px;height:8.6px;background:#8db3d9;"></div>
<div style="left:632px;top:622.4px;width:35.4px;height:8.6px;background:#8db3d9;"></div>
<svg style="left:248.6px;top:597.6px;" width="20" height="20" viewBox="0 0 20 20"><circle cx="10" cy="10" r="9.6" fill="#2f6fc4"/><path d="M2.4 5.2 Q8 -1.4 16.4 3.2 Q12 3 9 6.2 Z" fill="#7fb6ec"/><path d="M3.6 8.4 L13.6 7.2 L15.2 14.8 L5.6 16 Z" fill="#f4f6fa"/><path d="M3.6 8.4 L9.8 12 L13.6 7.2" fill="none" stroke="#b8c6dc" stroke-width="0.8"/></svg>
<svg style="left:292.4px;top:598.4px;" width="20" height="17" viewBox="0 0 20 17"><path d="M0.6 2 Q0.6 0.6 2 0.6 H7.4 L9.2 2.6 H18 Q19.4 2.6 19.4 4 V15 Q19.4 16.4 18 16.4 H2 Q0.6 16.4 0.6 15 Z" fill="#f7c948"/><path d="M0.6 5.4 H19.4 V15 Q19.4 16.4 18 16.4 H2 Q0.6 16.4 0.6 15 Z" fill="#fbd968"/><rect x="4.4" y="9.6" width="11.2" height="6.8" fill="#4a9fd8"/><rect x="7" y="12" width="6" height="4.4" fill="#fbd968"/></svg>
<svg style="left:335px;top:597.4px;" width="21" height="20" viewBox="0 0 21 20"><path d="M0.6 8.2 L10.5 0.8 L20.4 8.2 V19.2 H0.6 Z" fill="#1f74c4"/><path d="M0.6 8.4 H20.4 V19.2 H0.6 Z" fill="#3fa7e6"/><path d="M0.6 8.4 L10.5 14.6 L20.4 8.4 Z" fill="#8fd3f7"/></svg>
<svg style="left:378.6px;top:597.6px;" width="21" height="20" viewBox="0 0 21 20"><rect x="5.6" y="0.6" width="15" height="18.8" rx="1.2" fill="#2b7cd3"/><rect x="5.6" y="10" width="15" height="9.4" fill="#185abd"/><rect x="5.6" y="5.2" width="15" height="4.8" fill="#41a5ee"/><rect x="0.4" y="4.6" width="11" height="11" rx="1" fill="#103f91"/></svg>
<span style="left:380.91px;top:604.19px;font-size:7.6px;color:#fff;font-weight:bold;">W</span>
<svg style="left:422.6px;top:597.4px;" width="20" height="20" viewBox="0 0 20 20"><circle cx="10" cy="10" r="9.6" fill="#1b6fc8"/><path d="M1 8.6 Q3 0.4 11 0.6 Q19.6 1.4 19.4 10.2 H9.4 Q9.8 6.6 6.8 6.4 Q3.2 6 1 8.6 Z" fill="#39c481"/><path d="M9.4 10.2 H19.4 Q18.4 13 15.4 13.4 Q10.6 13.8 9.4 10.2 Z" fill="#2c2a2a"/><path d="M2 13 Q4 19.6 11 19.4 Q6.4 17.6 6.4 13.4 Q6.2 10 9.2 8.4 Q3.6 8 2 13 Z" fill="#0d4fa0"/></svg>
<svg style="left:465.6px;top:597px;" width="21" height="21" viewBox="0 0 21 21"><circle cx="10.5" cy="10.5" r="10.2" fill="#2a6cf0"/></svg>
<span style="left:468.89px;top:604.54px;font-size:5.6px;color:#fff;font-weight:bold;">zoom</span>
<svg style="left:508.6px;top:597.6px;" width="21" height="20" viewBox="0 0 21 20"><rect x="5.6" y="0.6" width="15" height="18.8" rx="1.2" fill="#21a366"/><rect x="5.6" y="10" width="15" height="9.4" fill="#107c41"/><rect x="13" y="0.6" width="7.6" height="9.4" fill="#33c481"/><rect x="0.4" y="4.6" width="11" height="11" rx="1" fill="#0e6a38"/></svg>
<span style="left:512.07px;top:604.19px;font-size:7.6px;color:#fff;font-weight:bold;">X</span>
<svg style="left:552.6px;top:597.4px;" width="20" height="20" viewBox="0 0 20 20"><ellipse cx="10" cy="10" rx="9.6" ry="9.8" fill="#e0202c"/><ellipse cx="10" cy="10" rx="4.2" ry="6.6" fill="#2c2a2a"/></svg>
<svg style="left:596.4px;top:598px;" width="20" height="19" viewBox="0 0 20 19"><rect x="0.6" y="0.6" width="18.8" height="5.6" fill="#8a3fa0"/><rect x="0.6" y="6.2" width="18.8" height="5.6" fill="#2f6fc4"/><rect x="0.6" y="11.8" width="18.8" height="5.8" fill="#3fa34d"/><rect x="0.6" y="0.6" width="3" height="17" fill="#c0392b"/><rect x="16.4" y="0.6" width="3" height="17" fill="#c0392b"/><rect x="7.6" y="0.2" width="4.8" height="18" fill="#d9b24a"/><rect x="6.4" y="7" width="7.2" height="4.4" fill="#b8902e"/></svg>
<svg style="left:639.6px;top:597.6px;" width="22" height="20" viewBox="0 0 22 20"><path d="M4 3 Q8 -0.6 11 3.4 Q15 0.8 17.6 4.6 Q21.6 8 18.4 12.2 Q19.4 17.4 14 17.6 Q10.6 20.6 7.4 17.4 Q2 18 2.6 12.4 Q-0.6 8 4 3 Z" fill="#a81818"/><circle cx="7" cy="5.6" r="2" fill="#d9c9c9"/></svg>
<span style="left:649.0px;top:606.43px;font-size:5.4px;color:#f0c8b0;font-weight:bold;">64</span>
<svg style="left:815.6px;top:603.6px;" width="11" height="7" viewBox="0 0 11 7"><path d="M0.5 6.2 L5.3 1 L10.1 6.2" fill="none" stroke="#dcdcdc" stroke-width="1"/></svg>
<svg style="left:834px;top:601.6px;" width="16" height="12" viewBox="0 0 16 12"><rect x="3" y="0.6" width="11.8" height="8.2" fill="none" stroke="#dcdcdc" stroke-width="0.9"/><path d="M5.6 11 H11.4 M8.6 8.8 V11" stroke="#dcdcdc" stroke-width="0.9"/><rect x="0.5" y="1.2" width="3.4" height="4.2" fill="#2c2a2a" stroke="#dcdcdc" stroke-width="0.8"/><path d="M2.2 5.4 V9.8 H5.6" fill="none" stroke="#dcdcdc" stroke-width="0.8"/></svg>
<svg style="left:855px;top:601.6px;" width="16" height="11" viewBox="0 0 16 11"><rect x="3.8" y="2.6" width="11" height="7.6" fill="none" stroke="#dcdcdc" stroke-width="0.9"/><rect x="4.6" y="5" width="9.4" height="4.6" fill="#f2f2f2"/><path d="M1.2 0.4 V2 M3.2 0.4 V2 M0.4 2.2 H4 V4 Q4 5.4 2.2 5.4 Q0.4 5.4 0.4 4 Z M2.2 5.4 V9.4" fill="none" stroke="#dcdcdc" stroke-width="0.8"/></svg>
<svg style="left:876.8px;top:601.8px;" width="14" height="12" viewBox="0 0 14 12"><path d="M0.6 3.8 H2.8 L5.8 0.8 V10.8 L2.8 7.8 H0.6 Z" fill="none" stroke="#dcdcdc" stroke-width="0.9"/><path d="M7.6 4 Q8.8 5.8 7.6 7.6" fill="none" stroke="#bdbdbd" stroke-width="0.8"/><path d="M9.6 2.4 Q12 5.8 9.6 9.2" fill="none" stroke="#8a8a8a" stroke-width="0.8"/><path d="M11.4 1.2 Q14.6 5.8 11.4 10.4" fill="none" stroke="#5a5a5a" stroke-width="0.8"/></svg>
<div style="left:850.1px;top:292.6px;width:1.2px;height:22.6px;background:#979797;"></div>
<div style="left:852.9px;top:292.6px;width:1.2px;height:22.6px;background:#979797;"></div>
<div style="left:862.3px;top:140.8px;width:43.7px;height:77.7px;background:#202020;"></div>
<svg style="left:867.8px;top:145px;" width="19" height="22" viewBox="0 0 19 22"><g fill="#f6b72f"><rect x="1.2" y="4.6" width="3.4" height="11" rx="1.7"/><rect x="4.4" y="1.4" width="3.5" height="13" rx="1.75"/><rect x="7.7" y="0.4" width="3.5" height="14" rx="1.75"/><rect x="11" y="2" width="3.4" height="13" rx="1.7"/><path d="M1.2 11 H14.4 V14.6 Q14.4 21.4 7.8 21.4 Q1.2 21.4 1.2 15 Z"/><path d="M12 15.6 Q14.6 11.6 17 10.4 Q18.8 10 18.4 11.8 Q16.6 14 15.4 17.4 Q13.6 20.6 11 20.6 Z"/></g><path d="M4.5 5 V11 M7.8 4 V11 M11.1 5 V11" stroke="#e39a1c" stroke-width="0.5"/></svg>
<span style="left:871.2px;top:173.06px;font-size:14.6px;color:#fff;font-weight:bold;letter-spacing:-0.5px;">Rest</span>
<div style="left:862.3px;top:202px;width:43.7px;height:16.5px;background:#2b2b2b;"></div>
<svg style="left:865px;top:204.7px;" width="11" height="11" viewBox="0 0 11 11"><rect x="3.6" y="0.6" width="3.8" height="6.4" rx="1.9" fill="#e0524f"/><path d="M2 5.4 Q2 8.6 5.5 8.6 Q9 8.6 9 5.4 M5.5 8.6 V10.4" fill="none" stroke="#e0524f" stroke-width="0.9"/><path d="M1.2 10.2 L9.8 0.8" stroke="#e0524f" stroke-width="1"/></svg>
<span style="left:881.7px;top:205.35px;font-size:10.2px;color:#e4e4e4;letter-spacing:-0.4px;">Rest</span>
<div style="left:862.3px;top:224px;width:43.7px;height:78px;background:#d9b583;"></div>
<div style="left:895.4px;top:224px;width:10.6px;height:78px;background:#9c9a98;"></div>
<svg style="left:862.3px;top:224px;" width="38" height="78" viewBox="0 0 38 78"><path d="M12.6 2 Q14.4 20 18.4 62 H3.4 Q9.4 30 12.6 2 Z" fill="#f4eee6"/><path d="M12.6 3 Q13.6 20 14.6 40 L10.4 40 Q11.6 20 12.6 3 Z" fill="#fdfbf7"/><path d="M14.6 41 Q18.6 43 17.4 49 Q20 54 17.6 58 Q17 62.6 12 62.4 Q7 62 8.2 56.6 Q7.4 52 11 50.6 Q11.4 46 14.6 41 Z" fill="#c9394a"/><path d="M11 53 Q14 51.6 16 54 Q14 56.8 10.4 56 Z" fill="#e9d6d2"/><circle cx="12.6" cy="3.6" r="1.5" fill="#ecdcc6"/></svg>
<div style="left:862.3px;top:285px;width:43.7px;height:17px;background:rgba(92,88,84,0.88);"></div>
<span style="left:865.6px;top:288.76px;font-size:10.6px;color:#e8e8e8;">Dr.Bam</span>
<div style="left:862.3px;top:306.6px;width:43.7px;height:79.4px;background:#f6fafd;"></div>
<svg style="left:862.3px;top:306.6px;" width="38" height="80" viewBox="0 0 38 80"><path d="M0 51.8 L46 62.4 V80 H0 Z" fill="#1c4a7a"/><path d="M3 7 Q7 2.6 12 4.6 Q8 5 6.4 8.6 Z" fill="#3a8fd0"/><path d="M6 7.6 H11" stroke="#2a5f9a" stroke-width="1.6"/><path d="M13.4 6.6 H20" stroke="#5a7fa8" stroke-width="1.2"/><path d="M27 5 L30 8 M30 5 L27 8" stroke="#7a8fc8" stroke-width="0.9"/><path d="M31.6 6.6 H46" stroke="#3a8fd0" stroke-width="2"/></svg>
<div style="left:862.3px;top:370px;width:43.7px;height:16px;background:rgba(22,40,62,0.78);"></div>
<svg style="left:865px;top:372.1px;" width="11" height="11" viewBox="0 0 11 11"><rect x="3.6" y="0.6" width="3.8" height="6.4" rx="1.9" fill="#e0524f"/><path d="M2 5.4 Q2 8.6 5.5 8.6 Q9 8.6 9 5.4 M5.5 8.6 V10.4" fill="none" stroke="#e0524f" stroke-width="0.9"/><path d="M1.2 10.2 L9.8 0.8" stroke="#e0524f" stroke-width="1"/></svg>
<span style="left:881.7px;top:372.46px;font-size:10.4px;color:#e4e4e4;letter-spacing:-0.3px;">Dew</span>
<div style="left:858px;top:386.8px;width:48px;height:85.4px;background:#f1f4a2;"></div>
<div style="left:858px;top:386.8px;width:4.3px;height:85.4px;background:#c9e36a;background:linear-gradient(180deg,#f3f5a6 0%,#eef29c 22%,#b4dc52 45%,#a4d63e 56%,#dcec88 78%,#f3f5a6 100%);"></div>
<div style="left:862.3px;top:391.2px;width:43.7px;height:77.4px;background:#f6fafd;"></div>
<svg style="left:862.3px;top:391.2px;" width="38" height="78" viewBox="0 0 38 78"><path d="M0 51 L46 61.2 V78 H0 Z" fill="#1c4a7a"/><path d="M3 6.4 Q7 2 12 4 Q8 4.4 6.4 8 Z" fill="#3a8fd0"/><path d="M6 7 H11" stroke="#2a5f9a" stroke-width="1.6"/><path d="M13.4 6 H20" stroke="#5a7fa8" stroke-width="1.2"/><path d="M27 4.4 L30 7.4 M30 4.4 L27 7.4" stroke="#c87a9a" stroke-width="0.9"/><path d="M31.6 6 H46" stroke="#3a8fd0" stroke-width="2"/></svg>
<div style="left:862.3px;top:454px;width:43.7px;height:14.6px;background:rgba(22,40,62,0.80);"></div>
<span style="left:866px;top:455.17px;font-size:11px;color:#e8e8e8;">Dewi K</span>
</div></div></div></body></html>
